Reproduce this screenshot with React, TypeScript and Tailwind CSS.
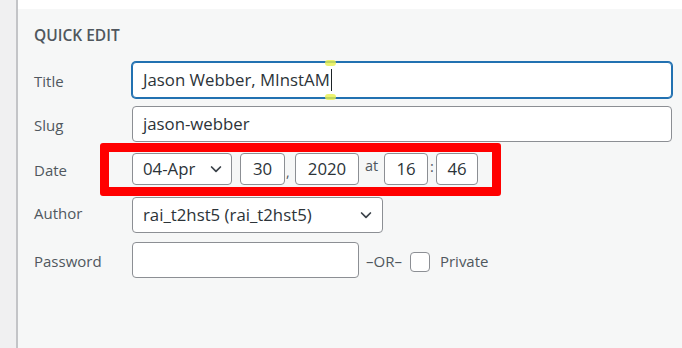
function Chevron() {
  return (
    <svg width="16" height="16" viewBox="0 0 20 20" className="text-[#3c434a]">
      <path d="M4.5 7.5l5.5 5.5 5.5-5.5" fill="none" stroke="currentColor" strokeWidth="2.2" strokeLinecap="round" strokeLinejoin="round" />
    </svg>
  );
}

export default function App() {
  return (
    <div className="flex h-[348px] w-[682px] overflow-hidden font-['Open_Sans',sans-serif] text-[#2c3338]">
      {/* left strip */}
      <div className="w-[16px] shrink-0 bg-[#f0f0f1]" />
      <div className="w-[2px] shrink-0 bg-[#c3c4c7]" />

      <div className="flex flex-1 flex-col">
        <div className="h-[9px] bg-white" />
        <div className="flex-1 bg-[#f6f7f7] pl-4 pt-[16px]">
          <div className="h-[20px] text-[15.5px] leading-[20px] font-semibold text-[#50575e] uppercase">
            Quick Edit
          </div>

          {/* Title */}
          <div className="mt-[17px] flex items-center">
            <label className="w-[98px] pt-[3px] text-[15px] text-[#50575e]">Title</label>
            <div className="relative flex h-[36px] w-[540px] items-center rounded-[4px] border border-[#2271b1] bg-white px-[10px] shadow-[0_0_0_1px_#2271b1]">
              <span className="text-[16.8px]">Jason Webber, MInstAM</span>
              <span className="ml-px h-[22px] w-px bg-[#1d2327]" />
              <span className="absolute left-[192px] top-[-3px] h-[6px] w-[11px] rounded-full bg-[#e8f04c]/80" />
              <span className="absolute left-[192px] bottom-[-3px] h-[6px] w-[11px] rounded-full bg-[#e8f04c]/80" />
            </div>
          </div>

          {/* Slug */}
          <div className="mt-[8px] flex items-center">
            <label className="w-[98px] pt-[2px] text-[15px] text-[#50575e]">Slug</label>
            <div className="flex h-[36px] w-[540px] items-center rounded-[4px] border border-[#8c8f94] bg-white px-[10px] text-[16.8px]">
              jason-webber
            </div>
          </div>

          {/* Date */}
          <div className="mt-px flex items-center">
            <label className="w-[66px] pt-[2px] text-[15px] text-[#50575e]">Date</label>
            <div className="flex h-[53px] w-[401px] items-start rounded-[3px] border-[9px] border-[#ff0000] pl-[23px] pt-px text-[16.8px]">
              <div className="flex h-[32px] w-[100px] items-center justify-between rounded-[4px] border border-[#8c8f94] bg-white pl-[10px] pr-[7px]">
                <span>04-Apr</span>
                <Chevron />
              </div>
              <div className="ml-[8px] flex h-[32px] w-[45px] items-center justify-center rounded-[4px] border border-[#8c8f94] bg-white">30</div>
              <span className="w-[10px] pt-[8px] pl-[1px] text-[14px] text-[#50575e]">,</span>
              <div className="flex h-[32px] w-[64px] items-center justify-center rounded-[4px] border border-[#8c8f94] bg-white">2020</div>
              <span className="w-[25px] pt-[2px] text-center text-[14.5px] text-[#50575e]">at</span>
              <div className="flex h-[32px] w-[44px] items-center justify-center rounded-[4px] border border-[#8c8f94] bg-white">16</div>
              <span className="w-[8px] pt-[3px] text-center text-[14.5px] text-[#50575e]">:</span>
              <div className="flex h-[32px] w-[42px] items-center justify-center rounded-[4px] border border-[#8c8f94] bg-white">46</div>
            </div>
          </div>

          {/* Author */}
          <div className="mt-px flex items-center">
            <label className="w-[98px] pb-[4px] text-[15px] text-[#50575e]">Author</label>
            <div className="flex h-[36px] w-[251px] items-center justify-between rounded-[4px] border border-[#8c8f94] bg-white pl-[10px] pr-[8px] text-[16.8px]">
              <span>rai_t2hst5 (rai_t2hst5)</span>
              <Chevron />
            </div>
          </div>

          {/* Password */}
          <div className="mt-[9px] flex items-center">
            <label className="w-[98px] pt-[3px] text-[15px] text-[#50575e]">Password</label>
            <div className="h-[36px] w-[227px] rounded-[4px] border border-[#8c8f94] bg-white" />
            <span className="ml-[7px] pt-[3px] text-[15px] text-[#50575e]">–OR–</span>
            <span className="ml-[8px] mt-[4px] h-[20px] w-[20px] rounded-[4px] border border-[#8c8f94] bg-white" />
            <span className="ml-[10px] pt-[3px] text-[15px] text-[#50575e]">Private</span>
          </div>
        </div>
      </div>
    </div>
  );
}
